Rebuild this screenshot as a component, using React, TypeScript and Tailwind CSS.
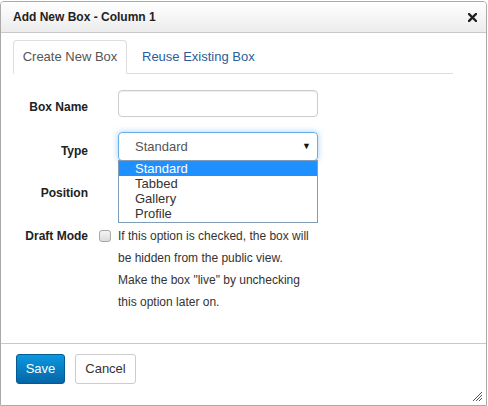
import { useState } from "react";

const font = { fontFamily: '"Liberation Sans", Arial, sans-serif' };

function CloseIcon() {
  return (
    <svg width="9" height="9" viewBox="0 0 9 9" className="block">
      <path d="M1 1 L8 8 M8 1 L1 8" stroke="#222" strokeWidth="2.4" strokeLinecap="square" />
    </svg>
  );
}

function ResizeGrip() {
  return (
    <svg width="11" height="11" viewBox="0 0 11 11" className="block">
      <path d="M10 1 L1 10 M10 4 L4 10 M10 7 L7 10" stroke="#555" strokeWidth="1" />
    </svg>
  );
}

export default function App() {
  const [draft, setDraft] = useState(false);
  const options = ["Standard", "Tabbed", "Gallery", "Profile"];

  return (
    <div className="w-[488px] h-[406px] bg-white pt-px" style={font}>
      <div className="relative w-[487px] h-[405px] border border-[#aaaaaa] rounded-t-[4px] flex flex-col overflow-hidden">
        {/* header */}
        <div className="h-[31px] shrink-0 flex items-center justify-between pl-3 pr-[9px] bg-gradient-to-b from-white to-[#ececec] border-b border-[#c8c8c8]">
          <span className="text-[12px] font-bold text-[#222]">Add New Box - Column 1</span>
          <CloseIcon />
        </div>

        {/* body */}
        <div className="flex-1 pl-3 pt-[7px]">
          <div className="flex w-[440px] h-[34px] border-b border-[#dddddd]">
            <div className="w-[114px] h-[34px] -mb-px flex items-center justify-center bg-white border border-[#dddddd] border-b-white rounded-t-[4px] text-[13px] text-[#555]">
              Create New Box
            </div>
            <div className="h-[33px] flex items-center pl-[15px] text-[13px] text-[#2a5d9c]">Reuse Existing Box</div>
          </div>

          <div className="mt-4 flex flex-col">
            <div className="flex h-[27px]">
              <label className="w-[75px] text-right text-[12px] font-bold text-[#222] pt-[8px]">Box Name</label>
              <input className="ml-[30px] w-[200px] h-[27px] border border-[#cccccc] rounded-[4px] shadow-[inset_0_1px_1px_rgba(0,0,0,0.075)] outline-none" />
            </div>

            <div className="flex mt-[15px] relative">
              <label className="w-[75px] text-right text-[12px] font-bold text-[#222] pt-[10px]">Type</label>
              <div className="ml-[30px] relative">
                <div className="w-[200px] h-[29px] border border-[#66afe9] rounded-[4px] shadow-[0_0_6px_rgba(102,175,233,0.6)] flex items-center justify-between pl-4 pr-[6px] text-[13px] text-[#555]">
                  <span>Standard</span>
                  <span className="text-[9px] text-[#111]">▼</span>
                </div>
                <div className="absolute left-0 top-[28px] w-[200px] border border-[#7f9db9] bg-white z-10 pb-px">
                  {options.map((o, i) => (
                    <div
                      key={o}
                      className={`h-[15px] leading-[15px] pl-4 text-[13px] ${i === 0 ? "bg-[#1e90ff] text-white" : "text-[#333]"}`}
                    >
                      {o}
                    </div>
                  ))}
                </div>
              </div>
            </div>

            <div className="flex mt-[15px]">
              <label className="w-[75px] text-right text-[12px] font-bold text-[#222] pt-[8px]">Position</label>
              <div className="ml-[30px] w-[200px] h-[29px] border border-[#cccccc] rounded-[4px]" />
            </div>

            <div className="flex mt-[20px]">
              <label className="w-[75px] text-right text-[12px] font-bold text-[#222] leading-[22px]">Draft Mode</label>
              <div className="ml-[11px] pt-[5px]">
                <button
                  onClick={() => setDraft(!draft)}
                  className="block w-[12px] h-[12px] rounded-[3px] border border-[#a8a8a8] bg-gradient-to-b from-[#f4f4f4] to-[#dcdcdc]"
                />
              </div>
              <p className="ml-[7px] w-[194px] text-[12px] leading-[22px] text-[#333]">
                If this option is checked, the box will be hidden from the public view. Make the box "live" by unchecking
                this option later on.
              </p>
            </div>
          </div>
        </div>

        {/* footer */}
        <div className="h-[62px] shrink-0 border-t border-[#c8c8c8] flex items-start gap-[10px] pl-[15px] pt-[10px]">
          <button className="w-[49px] h-[30px] rounded-[3px] border border-[#045a92] bg-gradient-to-b from-[#0c98e0] to-[#0566a6] text-white text-[13px]">
            Save
          </button>
          <button className="w-[61px] h-[30px] rounded-[3px] border border-[#cccccc] bg-white text-[#333] text-[13px]">
            Cancel
          </button>
        </div>
        <div className="absolute right-[3px] bottom-[3px]">
          <ResizeGrip />
        </div>
      </div>
    </div>
  );
}
